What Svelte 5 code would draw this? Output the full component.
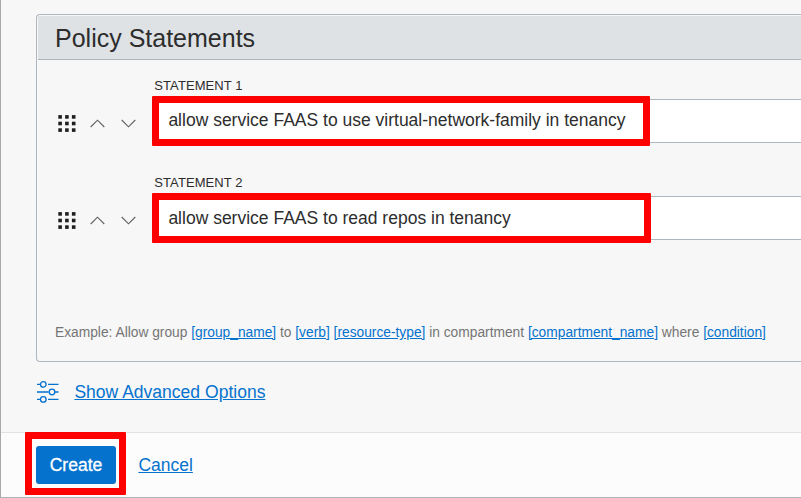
<script>
  const statements = [
    { label: 'STATEMENT 1', value: 'allow service FAAS to use virtual-network-family in tenancy', mark: 498, line: 41 },
    { label: 'STATEMENT 2', value: 'allow service FAAS to read repos in tenancy', mark: 499, line: 42 }
  ];
  const dots = [0, 1, 2].flatMap((r) => [0, 1, 2].map((c) => ({ x: 0.3 + c * 6.8, y: 0.1 + r * 6.6 })));
</script>

<div class="page">
  <main>
    <section class="panel">
      <h2><span>Policy Statements</span></h2>
      <div class="rows">
        {#each statements as s}
          <div class="row">
            <div class="tools">
              <svg class="grip" width="18" height="18" viewBox="0 0 18 18">
                {#each dots as d}
                  <rect x={d.x} y={d.y} width="3.6" height="3.6" fill="#202020" />
                {/each}
              </svg>
              <svg class="up" width="15" height="9" viewBox="0 0 15 9"><path d="M.7 8 7.5 1.2 14.3 8" /></svg>
              <svg class="down" width="15" height="9" viewBox="0 0 15 9"><path d="M.7 1 7.5 7.8 14.3 1" /></svg>
            </div>
            <div class="field">
              <div class="label">{s.label}</div>
              <div class="input" style="line-height: {s.line}px">{s.value}<i class="mark" style="width: {s.mark}px"></i></div>
            </div>
          </div>
        {/each}
      </div>
      <p class="example">Example: Allow group <a href="#group">[group_name]</a> to <a href="#verb">[verb]</a> <a href="#resource">[resource-type]</a> in compartment <a href="#compartment">[compartment_name]</a> where <a href="#condition">[condition]</a></p>
    </section>
    <div class="advanced">
      <svg width="24" height="24" viewBox="0 0 24 24" fill="none" stroke="#0572ce" stroke-width="1.3">
        <path d="M1 4.4h3.2M12 4.4h10.5M1 12h11.6M18.7 12h3.8M1 19.4h3.2M12 19.4h10.5" />
        <circle cx="7.3" cy="4.4" r="2.8" /><circle cx="16" cy="12" r="2.8" /><circle cx="7.3" cy="19.4" r="2.8" />
      </svg>
      <a href="#advanced">Show Advanced Options</a>
    </div>
  </main>
  <footer>
    <div class="create"><button>Create</button><i class="mark"></i></div>
    <a href="#cancel">Cancel</a>
  </footer>
</div>

<style>
  .page {
    box-sizing: border-box;
    width: 801px;
    height: 498px;
    display: flex;
    flex-direction: column;
    overflow: hidden;
    background: #f7f7f7;
    border-left: 1px solid #a8a8ac;
    border-bottom: 1px solid #b0b2bb;
    font-family: "Liberation Sans", Arial, sans-serif;
    color: #2d2d2d;
  }
  main { box-sizing: border-box; height: 432px; padding: 14px 0 0 35px; flex: none; }
  a { color: #0572ce; text-decoration: underline; }
  .panel {
    box-sizing: border-box;
    height: 348px;
    padding: 1px 0 0 1px;
    border: 1px solid #aeb6c0;
    border-right: 0;
    border-radius: 4px 0 0 4px;
  }
  h2 {
    box-sizing: border-box;
    height: 44px;
    margin: 0;
    padding-left: 17px;
    border-bottom: 1px solid #aeb6be;
    background: #dee2e5;
    font-size: 25px;
    font-weight: 400;
    line-height: 44px;
  }
  .rows { display: flex; flex-direction: column; gap: 17px; padding-top: 16px; }
  .row { display: flex; height: 80px; }
  .tools { display: flex; width: 114px; flex: none; padding-top: 39px; }
  .grip { margin-left: 20px; }
  .up, .down { fill: none; stroke: #606060; stroke-width: 1.1; }
  .up { margin: 4px 0 0 14px; }
  .down { margin: 4px 0 0 16px; }
  .field { flex: 1; }
  .label { padding-left: 2.3px; height: 23px; line-height: 20px; font-size: 13px; letter-spacing: 0.08px; }
  .input {
    position: relative;
    box-sizing: border-box;
    height: 44px;
    padding-left: 16.4px;
    background: #fff;
    border-top: 1px solid #aeb6be;
    border-bottom: 1px solid #aeb6be;
    font-size: 17.5px;
    white-space: nowrap;
  }
  .mark { position: absolute; box-sizing: border-box; border: 7px solid #f00; border-radius: 1px; }
  .input .mark { left: 0; top: -4px; height: 50px; }
  .example { margin: 70px 0 0 17px; font-size: 13.77px; line-height: 20px; color: #757575; white-space: nowrap; }
  .advanced { display: flex; align-items: center; gap: 14.4px; height: 24px; margin-top: 18px; font-size: 17.55px; }
  footer {
    box-sizing: border-box;
    flex: 1;
    display: flex;
    gap: 22.4px;
    padding: 13px 0 0 35px;
    border-top: 1px solid #e2e2e4;
    background: #fcfcfc;
    font-size: 17.5px;
    line-height: 38px;
  }
  .create { position: relative; width: 80px; height: 38px; }
  .create .mark { left: -11px; top: -14px; width: 101px; height: 63px; }
  button {
    display: block;
    width: 80px;
    height: 38px;
    padding: 0;
    border: 0;
    border-radius: 3px;
    background: #0572ce;
    color: #fff;
    font: 17.5px "Liberation Sans", Arial, sans-serif;
    -webkit-text-stroke: 0.3px #fff;
  }
</style>
